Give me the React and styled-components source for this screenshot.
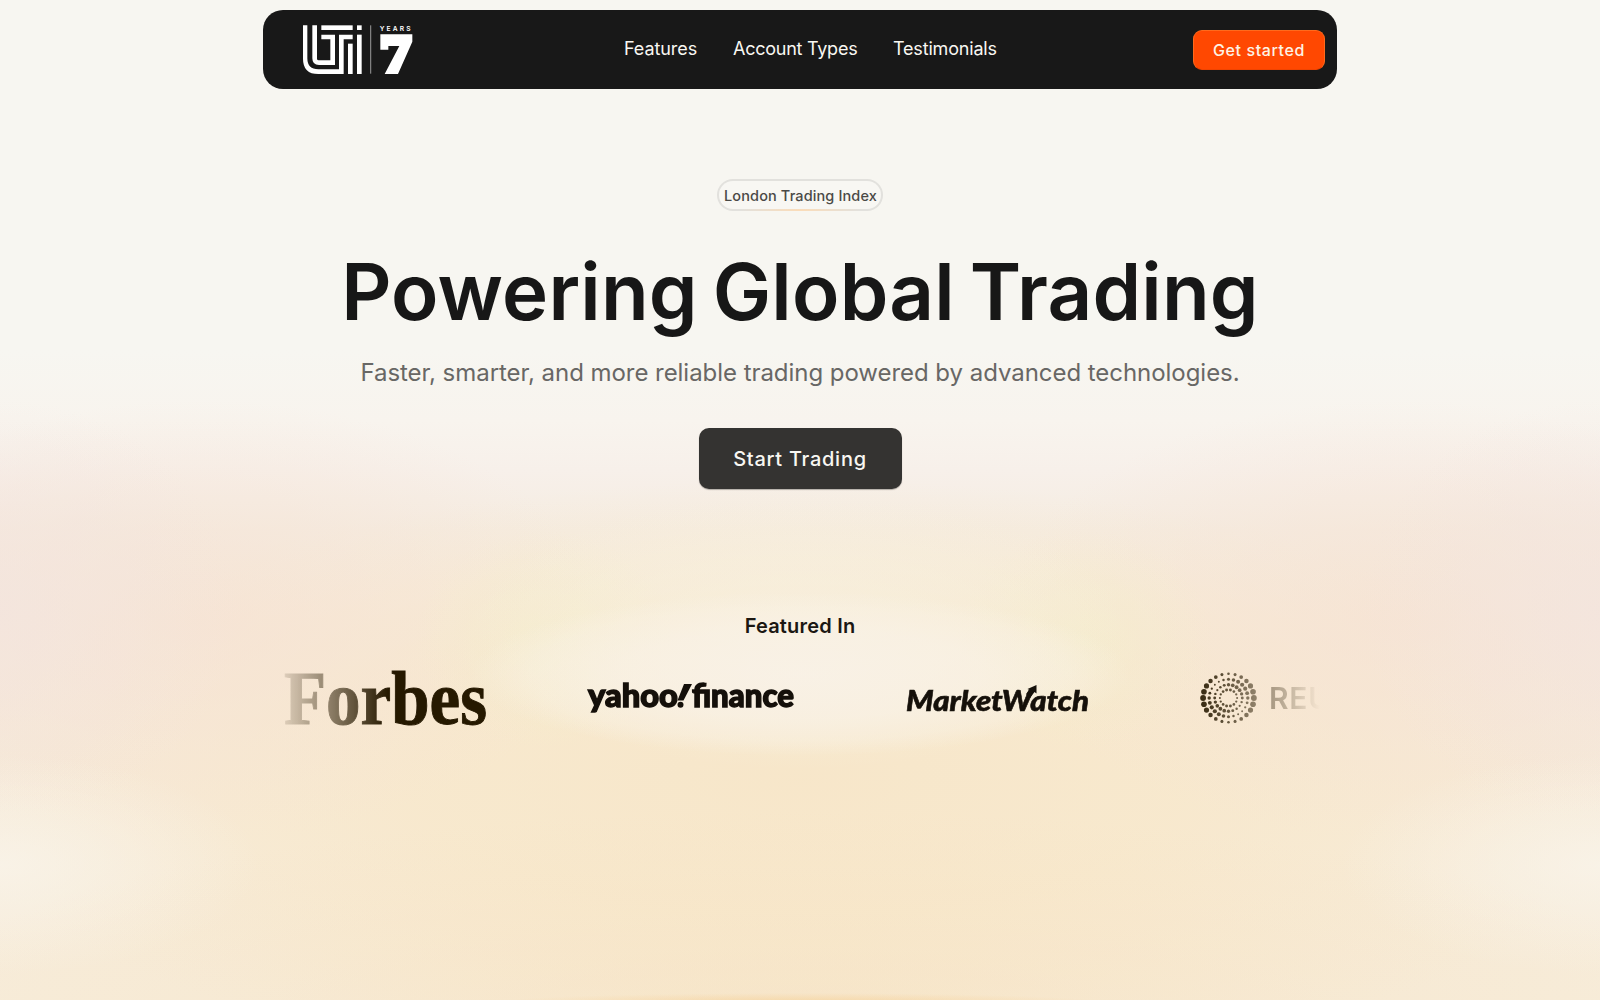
import React from "react";
import styled, { createGlobalStyle } from "styled-components";

const GlobalStyle = createGlobalStyle`
  *, *::before, *::after { box-sizing: border-box; }
  html, body { margin: 0; padding: 0; }
  body {
    background: #f7f6f1;
    font-family: Inter, "Liberation Sans", sans-serif;
    color: #181818;
    overflow: hidden;
  }
`;

const Page = styled.div`
  width: 100%;
  height: 100vh;
  min-height: 1000px;
  display: flex;
  flex-direction: column;
  align-items: center;
  padding-top: 10px;
  overflow: hidden;
  background:
    radial-gradient(ellipse 300px 9px at 50% 1002px, rgba(245, 208, 150, 0.65), rgba(245, 208, 150, 0) 100%),
    radial-gradient(ellipse 330px 82px at 50% 674px, rgba(249, 242, 233, 0.8) 0%, rgba(249, 242, 232, 0.65) 55%, rgba(249, 242, 230, 0.4) 82%, rgba(249, 243, 230, 0) 100%),
    radial-gradient(ellipse 330px 140px at 50% 630px, rgba(248, 243, 228, 0.55) 0%, rgba(248, 243, 226, 0.35) 50%, rgba(248, 243, 226, 0) 100%),
    radial-gradient(ellipse 130px 110px at 545px 640px, rgba(244, 238, 204, 0.6), rgba(246, 238, 206, 0) 100%),
    radial-gradient(ellipse 130px 110px at 1085px 640px, rgba(244, 238, 204, 0.6), rgba(246, 238, 206, 0) 100%),
    radial-gradient(ellipse 900px 200px at 50% 1010px, rgba(246, 224, 190, 0.5), rgba(246, 226, 190, 0) 100%),
    radial-gradient(ellipse 260px 110px at 0 865px, rgba(249, 244, 234, 0.8), rgba(249, 244, 232, 0) 100%),
    radial-gradient(ellipse 260px 110px at 100% 865px, rgba(249, 244, 234, 0.8), rgba(249, 244, 232, 0) 100%),
    radial-gradient(ellipse 240px 210px at 0 610px, rgba(243, 228, 222, 0.75), rgba(245, 228, 220, 0) 100%),
    radial-gradient(ellipse 240px 210px at 100% 610px, rgba(243, 228, 222, 0.75), rgba(245, 228, 220, 0) 100%),
    radial-gradient(ellipse 400px 220px at 200px 620px, rgba(246, 226, 211, 0.75), rgba(246, 226, 212, 0) 100%),
    radial-gradient(ellipse 400px 220px at 1400px 620px, rgba(246, 226, 211, 0.75), rgba(246, 226, 212, 0) 100%),
    radial-gradient(ellipse 860px 300px at 50% 780px, rgba(247, 230, 200, 0.9) 0%, rgba(248, 232, 202, 0.75) 45%, rgba(248, 236, 216, 0) 100%),
    linear-gradient(180deg, #f7f6f1 0, #f7f6f1 350px, #f8f4ee 420px, #f7f0ea 470px, #f5ece1 530px, #f6ebdc 620px, #f6ead9 760px, #f7ecd9 1000px);
`;

const NavBar = styled.header`
  width: 1074px;
  height: 79px;
  flex: none;
  padding: 0 12px 0 40px;
  border-radius: 20px;
  background: #181818;
  display: grid;
  grid-template-columns: 321px 1fr auto;
  align-items: center;
`;

const LogoLink = styled.a`
  display: block;
  height: 50px;

  svg {
    display: block;
    overflow: visible;
  }
`;

const NavLinks = styled.nav`
  display: flex;
  gap: 36px;
  padding-bottom: 1px;
`;

const NavLink = styled.a`
  width: ${(p) => p.$width}px;
  color: #f8f7f2;
  font-size: 18px;
  line-height: 24px;
  letter-spacing: ${(p) => p.$tracking}px;
  white-space: nowrap;
  text-decoration: none;
`;

const NavButton = styled.button`
  width: 132px;
  height: 40px;
  margin-top: 1px;
  padding: 0;
  border: 1px solid #ff6a1c;
  border-bottom-color: #f04402;
  border-radius: 9px;
  background: #ff4801;
  color: #fdf3e6;
  font: 500 16px/20px Inter, "Liberation Sans", sans-serif;
  letter-spacing: 0.6px;
`;

const Badge = styled.div`
  width: 166px;
  height: 32px;
  margin-top: 90px;
  padding: 1px 0 0 1px;
  flex: none;
  display: flex;
  align-items: center;
  justify-content: center;
  border: 2px solid transparent;
  border-radius: 16px;
  background:
    linear-gradient(#f8f7f3, #f8f7f3) padding-box,
    radial-gradient(ellipse 60px 14px at 50% 100%, #fbdcb8, #e2e1dd) border-box;
  color: #4a4946;
  font-size: 14.5px;
  font-weight: 500;
  line-height: 20px;
  letter-spacing: 0.12px;
  white-space: nowrap;
`;

const Title = styled.h1`
  margin: 33px 0 0;
  flex: none;
  font-size: 78px;
  font-weight: 600;
  line-height: 96px;
  letter-spacing: 0.2px;
  word-spacing: -5px;
  white-space: nowrap;
  color: #171717;
`;

const Subtitle = styled.p`
  margin: 16px 0 0;
  flex: none;
  font-size: 24px;
  line-height: 34px;
  letter-spacing: -0.045px;
  white-space: nowrap;
  color: #686765;
`;

const StartButton = styled.button`
  width: 203px;
  height: 61px;
  margin-top: 38px;
  padding: 0;
  flex: none;
  border: 0;
  border-radius: 10px;
  background: #343331;
  box-shadow: 0 1px 1px rgba(52, 51, 49, 0.35);
  color: #f8f7f2;
  font: 500 20px/26px Inter, "Liberation Sans", sans-serif;
  letter-spacing: 0.72px;
`;

const FeaturedHeading = styled.h2`
  margin: 123px 0 0;
  flex: none;
  font-size: 20px;
  font-weight: 600;
  line-height: 28px;
  letter-spacing: 0.2px;
  color: #1b1712;
`;

const Marquee = styled.div`
  width: 1060px;
  height: 70px;
  margin-top: 23px;
  padding-left: 14px;
  flex: none;
  display: flex;
  align-items: center;
  overflow: hidden;
  mask-image: linear-gradient(90deg, transparent 0, #000 118px, #000 920px, transparent 1050px);
`;

const BrandSlot = styled.div`
  flex: none;
  width: ${(p) => p.$width}px;
  height: 70px;

  svg {
    display: block;
    overflow: visible;
  }
`;

function LtiLogo() {
  return (
    <svg width="112" height="50" viewBox="1 1 336 150" fill="#fff" role="img" aria-label="LTI 7 years">
      <path d="M1 2h13v99q0 33 33 33h62V30h41v14h-27v104H47Q1 148 1 102z" />
      <path d="M29 2h14v100q0 5 5 5h35V44H56V30h41v91H49q-20 0-20-20z" />
      <rect x="56" y="2" width="94" height="14" />
      <rect x="136" y="57" width="14" height="91" />
      <rect x="163" y="2" width="14" height="14" />
      <rect x="163" y="30" width="14" height="118" />
      <rect x="203" y="2" width="2.500" height="145" fill="#b5b5b5" />
      <text x="231" y="18" fontFamily="Inter, sans-serif" fontWeight="600" fontSize="20" letterSpacing="6.5">YEARS</text>
      <path d="M233 29h96v22l-43 97h-40l44-84h-33v11h-24z" />
    </svg>
  );
}

function Forbes() {
  return (
    <svg width="205" height="70" fill="#261900" stroke="#261900" strokeWidth="1">
      <text x="0" y="61" fontFamily="'Liberation Serif', serif" fontWeight="700" fontSize="77" textLength="203" lengthAdjust="spacingAndGlyphs">Forbes</text>
    </svg>
  );
}

function YahooFinance() {
  return (
    <svg width="208" height="70" fill="#15100a" stroke="#15100a" strokeWidth="1.4">
      <text x="0" y="44" fontFamily="Lato, sans-serif" fontWeight="900" fontSize="31.5" textLength="90" lengthAdjust="spacingAndGlyphs">yahoo</text>
      <path stroke="none" d="M96 21h8l-8.500 16.500h-6z" />
      <circle cx="92.500" cy="41.700" r="3" stroke="none" />
      <text x="104" y="44" fontFamily="Lato, sans-serif" fontWeight="900" fontSize="31.5" textLength="102" lengthAdjust="spacingAndGlyphs">finance</text>
    </svg>
  );
}

function MarketWatch() {
  return (
    <svg width="185" height="70" fill="#15100a">
      <text x="-1" y="47.500" fontFamily="Lato, sans-serif" fontWeight="900" fontStyle="italic" fontSize="29" textLength="183" lengthAdjust="spacingAndGlyphs" stroke="#15100a" strokeWidth="0.6">MarketWatch</text>
      <path d="M119 31l3.500-4-2-1 9-4v8.500l-2-1.500-4.500 6z" />
    </svg>
  );
}

const RINGS = [
  { count: 24, rx: 25.4, ry: 24.2, min: 1.3, max: 2.9, peak: 0 },
  { count: 24, rx: 19.3, ry: 18.7, min: 0.9, max: 2.1, peak: -40 },
  { count: 20, rx: 13.8, ry: 13.3, min: 1.1, max: 1.9, peak: -55 },
  { count: 14, rx: 8.6, ry: 8.2, min: 1, max: 1.5, peak: -90 },
];

function Reuters() {
  return (
    <svg width="200" height="70" fill="#261900">
      {RINGS.flatMap((ring, r) =>
        Array.from({ length: ring.count }, (_, i) => {
          const a = (i * 2 * Math.PI) / ring.count;
          const w = Math.abs(Math.cos(a - (ring.peak * Math.PI) / 180)) ** 1.5;
          return (
            <circle
              key={`${r}-${i}`}
              cx={28.5 + ring.rx * Math.cos(a)}
              cy={35 + ring.ry * Math.sin(a)}
              r={ring.min + (ring.max - ring.min) * w}
            />
          );
        })
      )}
      <text x="69" y="46" fontFamily="Inter, sans-serif" fontWeight="600" fontSize="30" letterSpacing="0.8">REUTERS</text>
    </svg>
  );
}

export default function App() {
  return (
    <>
      <GlobalStyle />
      <Page>
        <NavBar>
          <LogoLink><LtiLogo /></LogoLink>
          <NavLinks>
            <NavLink $width={73} $tracking={-0.08}>Features</NavLink>
            <NavLink $width={124} $tracking={-0.25}>Account Types</NavLink>
            <NavLink $width={104} $tracking={-0.18}>Testimonials</NavLink>
          </NavLinks>
          <NavButton>Get started</NavButton>
        </NavBar>
        <Badge>London Trading Index</Badge>
        <Title>Powering Global Trading</Title>
        <Subtitle>Faster, smarter, and more reliable trading powered by advanced technologies.</Subtitle>
        <StartButton>Start Trading</StartButton>
        <FeaturedHeading>Featured In</FeaturedHeading>
        <Marquee>
          <BrandSlot $width={304}><Forbes /></BrandSlot>
          <BrandSlot $width={319}><YahooFinance /></BrandSlot>
          <BrandSlot $width={293}><MarketWatch /></BrandSlot>
          <BrandSlot $width={200}><Reuters /></BrandSlot>
        </Marquee>
      </Page>
    </>
  );
}
